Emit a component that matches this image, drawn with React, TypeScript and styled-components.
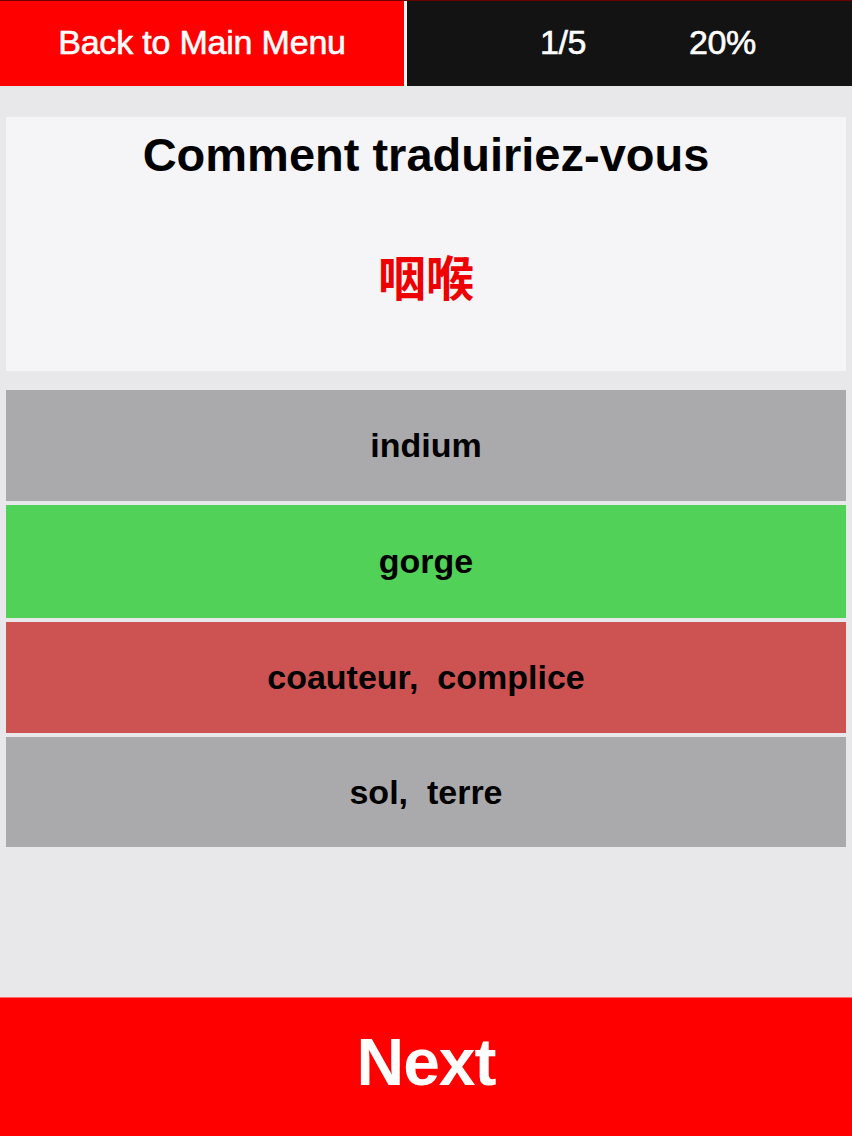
import React from "react";
import styled, { createGlobalStyle } from "styled-components";

const Global = createGlobalStyle`
  html, body { margin: 0; padding: 0; background: #e8e7e9; }
  body { font-family: "Liberation Sans", Arial, sans-serif; }
  * { box-sizing: border-box; }
`;

const Page = styled.div`
  min-height: 1136px;
  display: flex;
  flex-direction: column;
  background: #e8e7e9;
`;

const TopBar = styled.header`
  height: 86px;
  display: flex;
  background: #f2f2f2;
  gap: 3px;
  border-top: 1px solid #6a0000;
`;

const BackButton = styled.button`
  width: 404px;
  border: none;
  background: #ff0000;
  color: #ffffff;
  font-family: "Liberation Sans", Arial, sans-serif;
  font-size: 34px;
  display: flex;
  align-items: center;
  justify-content: center;
  padding: 0 0 2px;
  letter-spacing: -0.2px;
  -webkit-text-stroke: 0.6px #ffffff;
`;

const Progress = styled.div`
  flex: 1;
  background: #131313;
  color: #ffffff;
  display: flex;
  align-items: center;
  padding: 0 0 2px 133px;
  gap: 103px;
  font-size: 34px;
  letter-spacing: -0.4px;
  -webkit-text-stroke: 0.6px #ffffff;
`;

const Main = styled.main`
  display: flex;
  flex-direction: column;
  padding: 31px 6px 0;
  flex: 1;
`;

const QuestionCard = styled.section`
  height: 254px;
  background: #f5f4f6;
  display: flex;
  flex-direction: column;
  align-items: center;
  padding-top: 11px;
`;

const Title = styled.h1`
  margin: 0;
  font-size: 47px;
  line-height: 54px;
  font-weight: 700;
  color: #000000;
`;

const Word = styled.div`
  margin-top: 74px;
  font-family: "Liberation Sans", "Noto Sans CJK SC", sans-serif;
  font-size: 48px;
  line-height: 48px;
  font-weight: 700;
  color: #ee0000;
`;

const Answers = styled.div`
  margin-top: 19px;
  display: flex;
  flex-direction: column;
  gap: 4px;
`;

const Answer = styled.div<{ $bg: string; $h: number }>`
  height: ${(p) => p.$h}px;
  background: ${(p) => p.$bg};
  display: flex;
  align-items: center;
  justify-content: center;
  font-size: 34px;
  font-weight: 700;
  color: #000000;
  white-space: pre;
`;

const NextButton = styled.button`
  height: 139px;
  border: none;
  border-top: 1px solid #ff6b6b;
  background: #ff0000;
  color: #ffffff;
  font-family: "Liberation Sans", Arial, sans-serif;
  font-size: 66px;
  font-weight: 700;
  display: flex;
  align-items: center;
  justify-content: center;
  padding: 0 0 10px;
  letter-spacing: -1px;
`;

const answers = [
  { text: "indium", bg: "#aaa9ab", h: 111 },
  { text: "gorge", bg: "#51d157", h: 113 },
  { text: "coauteur,  complice", bg: "#cd5252", h: 111 },
  { text: "sol,  terre", bg: "#aaa9ab", h: 110 },
];

export default function App() {
  return (
    <Page>
      <Global />
      <TopBar>
        <BackButton>Back to Main Menu</BackButton>
        <Progress>
          <span>1/5</span>
          <span>20%</span>
        </Progress>
      </TopBar>
      <Main>
        <QuestionCard>
          <Title>Comment traduiriez-vous</Title>
          <Word>咽喉</Word>
        </QuestionCard>
        <Answers>
          {answers.map((a) => (
            <Answer key={a.text} $bg={a.bg} $h={a.h}>
              {a.text}
            </Answer>
          ))}
        </Answers>
      </Main>
      <NextButton>Next</NextButton>
    </Page>
  );
}
